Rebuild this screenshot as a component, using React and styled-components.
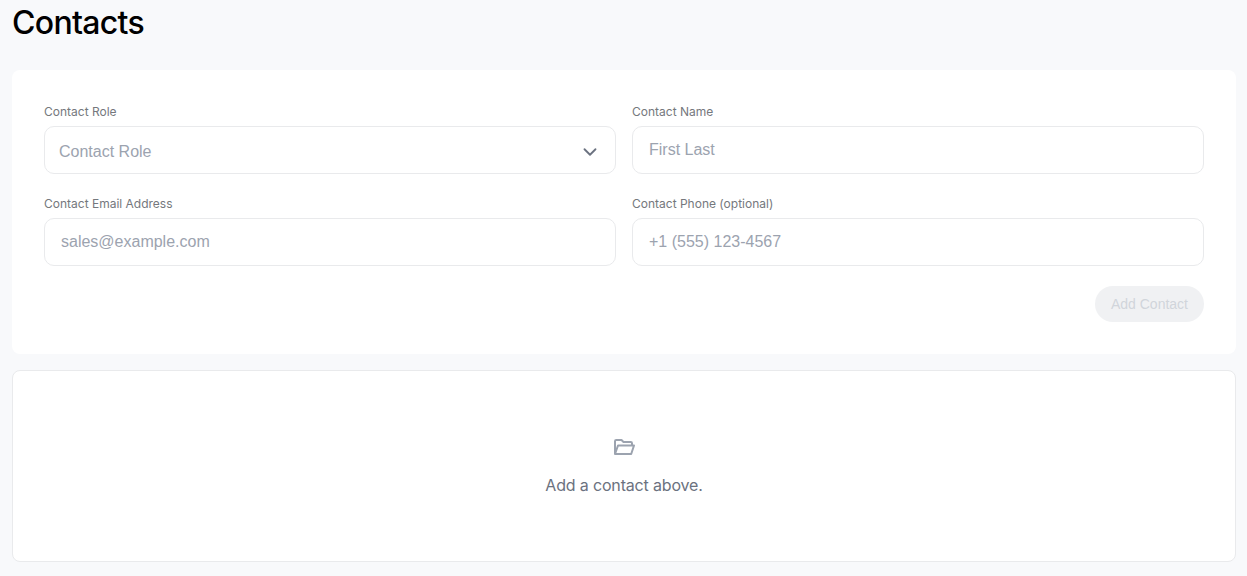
import React from 'react';
import styled, { createGlobalStyle } from 'styled-components';
import { ChevronDown } from 'lucide-react';

const GlobalStyle = createGlobalStyle`
  html, body {
    margin: 0;
    padding: 0;
    background: #f8f9fb;
    font-family: Inter, "Noto Sans", sans-serif;
  }
  * {
    box-sizing: border-box;
  }
`;

const Page = styled.div`
  padding: 0 11px 14px 12px;
`;

const Title = styled.h1`
  margin: 0;
  height: 70px;
  padding-top: 4px;
  font-size: 32px;
  line-height: 38px;
  font-weight: 500;
  letter-spacing: -0.7px;
  color: #000;
`;

const FormCard = styled.form`
  height: 284px;
  padding: 32px;
  background: #fff;
  border-radius: 8px;
`;

const FieldGrid = styled.div`
  display: grid;
  grid-template-columns: 1fr 1fr;
  column-gap: 16px;
  row-gap: 20px;
`;

const Field = styled.div`
  display: flex;
  flex-direction: column;
`;

const Label = styled.label`
  height: 24px;
  font-size: 12px;
  line-height: 20px;
  color: #75787d;
`;

const Input = styled.input`
  width: 100%;
  height: 48px;
  padding: 0 16px;
  border: 1px solid #e9eaec;
  border-radius: 10px;
  background: #fff;
  font-family: "Liberation Sans", Arial, sans-serif;
  font-size: 16px;
  color: #111827;
  outline: none;

  &::placeholder {
    color: #9ca3af;
    opacity: 1;
  }
`;

const SelectBox = styled.div`
  display: flex;
  align-items: center;
  justify-content: space-between;
  height: 48px;
  padding: 4px 14px 0 14px;
  border: 1px solid #e9eaec;
  border-radius: 10px;
  font-family: "Liberation Sans", Arial, sans-serif;
  font-size: 16px;
  color: #9ca3af;

  svg {
    color: #6b7280;
  }
`;

const Actions = styled.div`
  display: flex;
  justify-content: flex-end;
  margin-top: 20px;
`;

const AddButton = styled.button`
  height: 36px;
  padding: 0 16px;
  border: 0;
  border-radius: 18px;
  background: #f0f1f3;
  color: #d1d5db;
  font-family: "Liberation Sans", Arial, sans-serif;
  font-size: 14px;
`;

const EmptyCard = styled.div`
  display: flex;
  flex-direction: column;
  align-items: center;
  height: 192px;
  margin-top: 16px;
  padding-top: 68px;
  background: #fff;
  border: 1px solid #e9eaec;
  border-radius: 8px;
`;

const EmptyIcon = styled.svg`
  width: 21px;
  height: 16px;
  fill: none;
  stroke: #9ca3af;
  stroke-width: 2;
  stroke-linejoin: round;
`;

const EmptyText = styled.p`
  margin: 18px 0 0;
  font-size: 16px;
  line-height: 24px;
  letter-spacing: -0.16px;
  color: #6b7280;
`;

const FolderIcon = () => (
  <EmptyIcon viewBox="0 0 21 16">
    <path d="M1 15V2.2Q1 1 2.2 1H7.5L9.5 3H16.8Q18 3 18 4.2V6.5" />
    <path d="M1 15L4 6.5H20L17.2 15Z" />
  </EmptyIcon>
);

const App = () => (
  <Page>
    <GlobalStyle />
    <Title>Contacts</Title>
    <FormCard>
      <FieldGrid>
        <Field>
          <Label>Contact Role</Label>
          <SelectBox>
            Contact Role
            <ChevronDown size={22} strokeWidth={2} />
          </SelectBox>
        </Field>
        <Field>
          <Label>Contact Name</Label>
          <Input placeholder="First Last" />
        </Field>
        <Field>
          <Label>Contact Email Address</Label>
          <Input placeholder="sales@example.com" />
        </Field>
        <Field>
          <Label>Contact Phone (optional)</Label>
          <Input placeholder="+1 (555) 123-4567" />
        </Field>
      </FieldGrid>
      <Actions>
        <AddButton type="button" disabled>
          Add Contact
        </AddButton>
      </Actions>
    </FormCard>
    <EmptyCard>
      <FolderIcon />
      <EmptyText>Add a contact above.</EmptyText>
    </EmptyCard>
  </Page>
);

export default App;
